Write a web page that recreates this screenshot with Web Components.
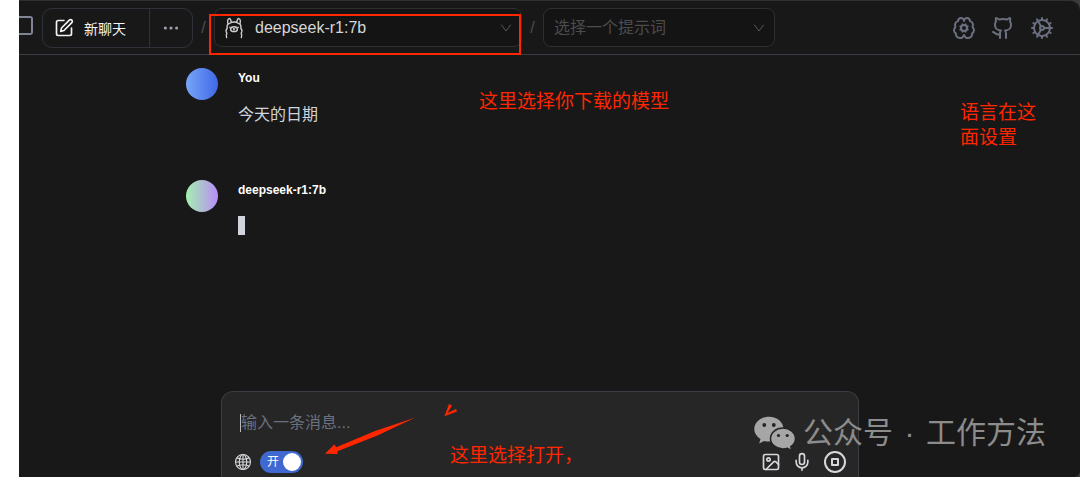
<!DOCTYPE html>
<html lang="zh-CN">
<head>
<meta charset="utf-8">
<meta name="viewport" content="width=device-width, initial-scale=1">
<title>deepseek-r1:7b</title>
<style>
body{margin:0;background:#fff;font-family:"Liberation Sans","Noto Sans CJK SC",sans-serif;color:#d1d5db}
</style>
</head>
<body>
<chat-app>
  <chat-header slot="header"></chat-header>
  <chat-message name="You" from="#78a6f8" to="#3f68e6">今天的日期</chat-message>
  <chat-message name="deepseek-r1:7b" from="#a4f0ae" to="#b98cf8" pending></chat-message>
  <chat-composer slot="composer"></chat-composer>
</chat-app>
<note-layer></note-layer>
<script>
const define = (name, html, setup) => customElements.define(name, class extends HTMLElement {
  connectedCallback() {
    if (this.shadowRoot) return;
    this.attachShadow({ mode: "open" }).innerHTML = html;
    if (setup) setup(this, this.shadowRoot);
  }
});

const ICONS = {
  edit: '<path d="M12 3H5a2 2 0 0 0-2 2v14a2 2 0 0 0 2 2h14a2 2 0 0 0 2-2v-7"/><path d="M18.375 2.625a2.121 2.121 0 1 1 3 3L12 15l-4 1 1-4Z"/>',
  more: '<g fill="currentColor" stroke="none"><circle cx="4.500" cy="12" r="2.100"/><circle cx="12" cy="12" r="2.100"/><circle cx="19.500" cy="12" r="2.100"/></g>',
  down: '<path d="M3 6l9 12 9-12"/>',
  brain: '<path d="M12 5a3 3 0 1 0-5.997.142 4 4 0 0 0-2.526 5.77 4 4 0 0 0 .556 6.588 4 4 0 0 0 7.636 2.106 3.2 3.2 0 0 0 .164-.546c.028-.13.306-.13.335 0a3.2 3.2 0 0 0 .163.546 4 4 0 0 0 7.636-2.106 4 4 0 0 0 .556-6.588 4 4 0 0 0-2.526-5.771A3 3 0 1 0 12 5"/><circle cx="12" cy="12" r="3"/><path d="m15.700 10.400-.9.4M9.200 13.200l-.9.4M13.600 15.700l-.4-.9M10.800 9.200l-.4-.9M15.700 13.500l-.9-.4M9.200 10.900l-.9-.4M10.500 15.700l.4-.9M13.100 9.200l.4-.9"/>',
  github: '<path d="M15 22v-4a4.800 4.800 0 0 0-1-3.500c3 0 6-2 6-5.500.08-1.250-.27-2.480-1-3.500.28-1.150.28-2.350 0-3.500 0 0-1 0-3 1.500-2.640-.5-5.360-.5-8 0C6 2 5 2 5 2c-.3 1.150-.3 2.350 0 3.500A5.403 5.403 0 0 0 4 9c0 3.500 3 5.500 6 5.500-.39.49-.68 1.050-.85 1.650-.17.6-.22 1.230-.15 1.850v4"/><path d="M9 18c-4.510 2-5-2-7-2"/>',
  cog: '<circle cx="12" cy="12" r="8"/><circle cx="12" cy="12" r="2"/><path d="M12 2v2M12 22v-2M17 20.660l-1-1.730M11 10.270 7 3.340M20.660 17l-1.730-1M3.340 7l1.730 1M14 12h8M2 12h2M20.660 7l-1.730 1M3.340 17l1.730-1M17 3.340l-1 1.730M11 13.730l-4 6.930"/>',
  globe: '<circle cx="12" cy="12" r="10"/><ellipse cx="12" cy="12" rx="5" ry="10"/><path d="M12 2v20M2 12h20M4 6.500c4.500 2 11.500 2 16 0M4 17.500c4.500-2 11.500-2 16 0"/>',
  image: '<rect x="3" y="3" width="18" height="18" rx="2"/><circle cx="9" cy="9" r="2"/><path d="m21 15-3.086-3.086a2 2 0 0 0-2.828 0L6 21"/>',
  mic: '<path d="M12 2a3 3 0 0 0-3 3v7a3 3 0 0 0 6 0V5a3 3 0 0 0-3-3Z"/><path d="M19 10v2a7 7 0 0 1-14 0v-2M12 19v3"/>',
  stop: '<circle cx="12" cy="12" r="10"/><rect x="9" y="9" width="6" height="6"/>',
  llama: '<path d="M4 22.500c-.8-2-.6-3.500.2-4.700-1.200-2-.9-4.200.4-5.600-.7-2.800.6-4.600 2.700-5.200M20 22.500c.8-2 .6-3.500-.2-4.700 1.200-2 .9-4.200-.4-5.600.7-2.800-.6-4.600-2.700-5.200M7.800 6.700C9 5 15 5 16.200 6.700M5.500 8c-.6-2.800-.2-6 1.100-6.300 1.300-.3 2.200 2 2.300 3.600M18.500 8c.6-2.800.2-6-1.100-6.300-1.300-.3-2.200 2-2.300 3.600"/><ellipse cx="12" cy="13.300" rx="3.700" ry="2.700"/><path d="M11.300 12.800l.7.6.7-.6M12 13.400v.9M7.500 11.200v.3M16.500 11.200v.3"/>'
};
customElements.define("ui-icon", class extends HTMLElement {
  connectedCallback() {
    if (this.shadowRoot) return;
    const s = this.getAttribute("size") || 24, w = this.getAttribute("weight") || 2;
    this.attachShadow({ mode: "open" }).innerHTML = `<style>:host{display:block;flex:none}svg{display:block}</style>
      <svg width="${s}" height="${s}" viewBox="0 0 24 24" fill="none" stroke="currentColor" stroke-width="${w}" stroke-linecap="round" stroke-linejoin="round" aria-hidden="true">${ICONS[this.getAttribute("name")]}</svg>`;
  }
});

define("chat-app", `<style>
  :host{display:block;margin-left:19px;background:#3c3c3e}
  .panel{box-sizing:border-box;min-height:100vh;display:flex;flex-direction:column;background:#181818;border-top:1px solid #303030;border-radius:0 10px 6px 0;overflow:hidden}
  main{flex:1;display:flex;flex-direction:column;padding:13px 19px 0 0}
  .log{flex:1;width:100%;max-width:708px;margin:0 auto;display:flex;flex-direction:column;gap:48px}
  .dock{width:100%;max-width:638px;margin:0 auto}
</style>
<div class="panel"><slot name="header"></slot>
<main><div class="log"><slot></slot></div><div class="dock"><slot name="composer"></slot></div></main></div>`);

define("ui-select", `<style>
  :host{display:block;position:relative;color:#4c4c4c}
  select{appearance:none;box-sizing:border-box;width:100%;height:39px;margin:0;padding:0 32px 0 10px;border:1px solid #2f2f31;border-radius:8px;background:#141414;color:inherit;font:inherit;font-size:16px;line-height:24px;display:block}
  :host([icon]) select{padding-left:40px;color:#d6d6d6}
  .lead,.arrow{position:absolute;top:0;bottom:0;display:flex;align-items:center;pointer-events:none}
  .lead{left:9px;color:#cfcfcf}.arrow{right:10px;color:#58585a}
</style><select><option></option></select><span class="arrow"><ui-icon name="down" size="12" weight="2"></ui-icon></span>`,
(host, root) => {
  root.querySelector("option").textContent = host.getAttribute("value");
  root.querySelector("select").setAttribute("aria-label", host.getAttribute("label"));
  if (host.hasAttribute("icon")) root.querySelector("select").insertAdjacentHTML("afterend",
    '<span class="lead"><ui-icon name="llama" size="22" weight="1.5"></ui-icon></span>');
});

define("chat-header", `<style>
  :host{display:flex;align-items:center;height:53px;border-bottom:1px solid #3a3d43;flex:none}
  button,a{font:inherit;color:inherit;background:none;border:0;margin:0;padding:0;display:flex;align-items:center;justify-content:center;text-decoration:none}
  .side{width:14px;height:19px;box-sizing:border-box;border:2px solid #7f8594;border-left:0;border-radius:0 3px 3px 0;margin-right:9px;margin-bottom:4px}
  .group{display:flex;box-sizing:border-box;width:151px;height:40px;border:1px solid #30323a;border-radius:10px;flex:none}
  .group .new{flex:1;justify-content:flex-start;padding-left:11px;gap:10px;color:#f3f3f3;font-size:14px}
  .group .more{width:43px;border-left:1px solid #30323a;color:#9aa0ad}
  .slash{width:21px;text-align:center;color:#4b4d53;font-size:16px;flex:none}
  .model{flex:0 1 308px}.prompt{flex:0 1 232px}
  nav{margin-left:auto;display:flex;gap:15px;padding:0 26px 0 16px;color:#6b7080}
</style>
<button class="side" aria-label="侧边栏"></button>
<div class="group"><button class="new"><ui-icon name="edit" size="20"></ui-icon><span>新聊天</span></button><button class="more" aria-label="更多"><ui-icon name="more" size="18"></ui-icon></button></div>
<span class="slash">/</span>
<ui-select class="model" icon label="模型" value="deepseek-r1:7b"></ui-select>
<span class="slash">/</span>
<ui-select class="prompt" label="提示词" value="选择一个提示词"></ui-select>
<nav><a href="#models" aria-label="模型管理"><ui-icon name="brain"></ui-icon></a><a href="#github" aria-label="GitHub"><ui-icon name="github"></ui-icon></a><a href="#settings" aria-label="设置"><ui-icon name="cog"></ui-icon></a></nav>`);

define("chat-message", `<style>
  :host{display:flex;gap:20px;min-height:64px}
  .avatar{width:32px;height:32px;border-radius:50%;flex:none}
  h2{margin:0 0 16px;font-size:12px;line-height:20px;font-weight:700;color:#fff}
  p{margin:0;font-size:16px;line-height:22px;color:#d1d5db}
  i{display:block;width:7px;height:19px;background:#d1d5db}
</style><div class="avatar"></div><div><h2></h2><p><slot></slot></p></div>`,
(host, root) => {
  root.querySelector("h2").textContent = host.getAttribute("name");
  root.querySelector(".avatar").style.background = `linear-gradient(90deg,${host.getAttribute("from")},${host.getAttribute("to")})`;
  if (host.hasAttribute("pending")) root.querySelector("p").innerHTML = "<i></i>";
});

define("chat-composer", `<style>
  :host{display:block;box-sizing:border-box;border:1px solid #3c3d44;border-bottom:0;border-radius:12px 12px 0 0;background:#262626;padding:19px 11px 3px 12px}
  .field{display:flex;align-items:center;padding-left:6px}
  .caret{width:1px;height:18px;background:#b8b8b8}
  textarea{flex:1;min-width:0;height:24px;box-sizing:border-box;margin:0;padding:0;border:0;outline:0;background:none;resize:none;overflow:hidden;color:#e5e7eb;font:inherit;font-size:16px;line-height:24px}
  textarea::placeholder{color:#6b7080;opacity:1}
  .tools{display:flex;align-items:center;margin-top:15px;height:24px;color:#d5d7db}
  button{font:inherit;color:inherit;background:none;border:0;margin:0;padding:0}
  .switch{display:flex;align-items:center;justify-content:space-between;width:43px;height:22px;margin-left:8px;padding:0 2px 0 7px;border-radius:11px;background:#3f68d0;color:#fff;font-size:12px;line-height:20px}
  .switch b{width:18px;height:18px;border-radius:50%;background:#fff}
  .right{margin-left:auto;display:flex;align-items:center;gap:11px}
</style>
<div class="field"><span class="caret"></span><textarea rows="1" aria-label="消息" placeholder="输入一条消息..."></textarea></div>
<div class="tools"><ui-icon name="globe" size="18" weight="1.5"></ui-icon>
<button class="switch" role="switch" aria-checked="true" aria-label="联网搜索"><span>开</span><b></b></button>
<div class="right"><button aria-label="图片"><ui-icon name="image" size="20"></ui-icon></button><button aria-label="语音"><ui-icon name="mic" size="20"></ui-icon></button><button aria-label="停止"><ui-icon name="stop"></ui-icon></button></div></div>`);

define("note-layer", `<style>
  :host{position:absolute;left:0;top:0;width:100%;height:100vh;overflow:hidden;pointer-events:none;color:#ff2600;font-size:19px;line-height:25px}
  :host>*{position:absolute}
  p{margin:0;white-space:nowrap}
  .box,.pick,.lang,.open,.arrow,.mark{position:absolute}
  .box{left:209px;top:14px;width:312px;height:41px;box-sizing:border-box;border:2px solid #ff2600}
  .pick{left:479px;top:89px}
  .lang{left:960px;top:100px}
  .open{left:450px;top:443px}
  .arrow{left:320px;top:400px}
  .mark{left:754px;top:413px;display:flex;align-items:center;color:#8c8c8c;font-size:30px;line-height:40px}
  .mark svg{margin-right:7px}
  .dot{width:33px;text-align:center}
</style>
<div class="box"></div>
<p class="pick">这里选择你下载的模型</p>
<p class="lang">语言在这<br>面设置</p>
<p class="open">这里选择打开，</p>
<svg class="arrow" width="140" height="60" viewBox="320 400 140 60" fill="#ff2600" aria-hidden="true"><path d="M325 453.700L334.300 444.500L336.300 447.300L375 431L415.500 417.500L378 435.300L337.500 451.200V454Z"/><path d="M444.500 416.300L449 404L452 405.500L447.500 413L456 409L457 411.500Z"/></svg>
<div class="mark"><svg width="42" height="36" viewBox="754 414 42 36" aria-hidden="true"><path fill="#a6a6a6" d="M769 415.700c8.200 0 14.500 5.500 14.500 12.300S777 440.500 769 440.500c-1.700 0-3.200-.2-4.600-.6l-5.200 2.600 1.300-4.600c-3.800-2.300-6.200-5.800-6.200-9.900 0-6.800 6.500-12.300 14.700-12.300Z"/><path fill="#a6a6a6" stroke="#252525" stroke-width="1.500" d="M783 427c6.900 0 12.500 4.700 12.500 10.500 0 3.300-1.900 6.200-4.700 8.100l1.100 4-4.500-2.300c-1.400.4-2.900.6-4.400.6-6.900 0-12.500-4.600-12.500-10.400S776.100 427 783 427Z"/><g fill="#252525"><circle cx="764.300" cy="424" r="1.900"/><circle cx="773.800" cy="424" r="1.900"/><circle cx="778.500" cy="434.500" r="1.600"/><circle cx="787.200" cy="434.500" r="1.600"/></g></svg><span>公众号</span><span class="dot">·</span><span>工作方法</span></div>`);
</script>
</body>
</html>
